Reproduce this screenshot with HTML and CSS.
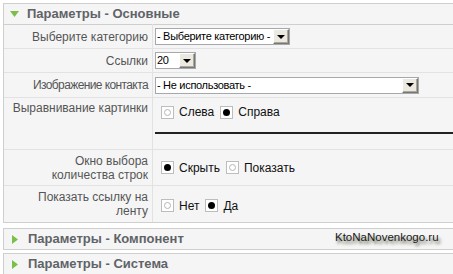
FILE: index.html
```html
<!DOCTYPE html>
<html>
<head>
<meta charset="utf-8">
<link rel="stylesheet" href="styles.css">
</head>
<body>
<div class="page">
  <div class="panel first">
    <div class="panel-title"><svg class="arrow" width="9" height="6" viewBox="0 0 9 6"><path d="M0 0H9L4.5 6Z" fill="#7bbf4a"/></svg>Параметры - Основные</div>
    <table class="params">
      <tr class="r1">
        <td class="key">Выберите категорию</td>
        <td class="val"><div class="select w-cat"><span class="sel-text">- Выберите категорию -</span><span class="btn"><i class="tri"></i></span></div></td>
      </tr>
      <tr class="r2">
        <td class="key">Ссылки</td>
        <td class="val"><div class="select w-num"><span class="sel-text">20</span><span class="btn"><i class="tri"></i></span></div></td>
      </tr>
      <tr class="r3">
        <td class="key tight">Изображение контакта</td>
        <td class="val"><div class="select w-img"><span class="sel-text">- Не использовать -</span><span class="btn"><i class="tri"></i></span></div></td>
      </tr>
      <tr class="r4">
        <td class="key top">Выравнивание картинки</td>
        <td class="val top">
          <div class="radios pad4">
            <span class="radio"><i class="dot off"></i></span><span class="rlabel">Слева</span>
            <span class="radio"><i class="dot on"></i></span><span class="rlabel">Справа</span>
          </div>
          <div class="rule"></div>
        </td>
      </tr>
      <tr class="r5">
        <td class="key">Окно выбора<br>количества строк</td>
        <td class="val">
          <div class="radios">
            <span class="radio"><i class="dot on"></i></span><span class="rlabel">Скрыть</span>
            <span class="radio"><i class="dot off"></i></span><span class="rlabel">Показать</span>
          </div>
        </td>
      </tr>
      <tr class="r6">
        <td class="key">Показать ссылку на<br>ленту</td>
        <td class="val">
          <div class="radios low">
            <span class="radio"><i class="dot off"></i></span><span class="rlabel">Нет</span>
            <span class="radio"><i class="dot on"></i></span><span class="rlabel">Да</span>
          </div>
        </td>
      </tr>
    </table>
  </div>
  <div class="panel closed">
    <div class="panel-title"><svg class="arrow" width="6" height="9" viewBox="0 0 6 9"><path d="M0 0V9L6 4.5Z" fill="#7bbf4a"/></svg>Параметры - Компонент</div>
  </div>
  <div class="panel closed">
    <div class="panel-title"><svg class="arrow" width="6" height="9" viewBox="0 0 6 9"><path d="M0 0V9L6 4.5Z" fill="#7bbf4a"/></svg>Параметры - Система</div>
  </div>
  <div class="watermark">KtoNaNovenkogo.ru</div>
</div>
</body>
</html>
```

FILE: styles.css
```css
html, body {
  margin: 0;
  padding: 0;
  background: #ffffff;
  overflow: hidden;
}
body {
  font-family: "Liberation Sans", Arial, sans-serif;
  width: 453px;
  height: 274px;
}
.page {
  position: relative;
  padding: 3px 0 0 3px;
  width: 450px;
  overflow: hidden;
}
.panel {
  width: 470px;
  border: 1px solid #cfcfcf;
  background: #f5f5f5;
  margin-bottom: 3px;
}
.panel.first {
  margin-bottom: 5px;
}
.panel-title {
  height: 20px;
  line-height: 20px;
  font-size: 13px;
  font-weight: bold;
  color: #5f6368;
  display: flex;
  align-items: center;
  padding-left: 6px;
}
.panel-title .arrow {
  margin-right: 8px;
}
.closed .panel-title .arrow {
  margin-left: 2px;
  margin-right: 10px;
}
.params {
  border-collapse: collapse;
  border-top: 1px solid #cfcfcf;
  width: 100%;
}
.params td {
  padding: 0;
  font-size: 12px;
  color: #555;
}
.params .key {
  width: 144px;
  text-align: right;
  padding-right: 4px;
  border-right: 1px solid #e2e2e2;
  border-bottom: 1px solid #e2e2e2;
  line-height: 14px;
}
.params .key.tight {
  letter-spacing: -0.6px;
}
.params .val {
  padding-left: 2px;
  border-bottom: 1px solid #e2e2e2;
  color: #111;
}
.params tr:last-child td { border-bottom: none; }
.params .top { vertical-align: top; }
.params .key.top { padding-top: 3px; }
.r1 .val { height: 23px; }
.r2 .val { height: 23px; }
.r3 .val { height: 24px; }
.r4 .val { height: 51px; }
.r5 .val { height: 35px; }
.r6 .val { height: 36px; }

.select {
  display: flex;
  align-items: stretch;
  height: 17px;
  box-sizing: border-box;
  border: 1px solid #a5a9ae;
  background: #fff;
  font-size: 11px;
  letter-spacing: -0.3px;
  color: #000;
}
.sel-text {
  flex: 1;
  line-height: 15px;
  padding-left: 1px;
  white-space: nowrap;
  overflow: hidden;
}
.w-cat { width: 135px; }
.w-num { width: 41px; }
.w-img { width: 264px; }
.btn {
  width: 16px;
  flex: none;
  box-sizing: border-box;
  background: #ece9e0;
  border-top: 1px solid #fff;
  border-left: 1px solid #fff;
  border-right: 1px solid #777;
  border-bottom: 1px solid #777;
  box-shadow: inset -1px -1px 0 #aca899;
  display: flex;
  align-items: center;
  justify-content: center;
}
.tri {
  width: 0;
  height: 0;
  border-left: 4px solid transparent;
  border-right: 4px solid transparent;
  border-top: 4px solid #000;
}

.radios {
  display: flex;
  align-items: center;
  font-size: 12px;
  color: #111;
  padding-left: 6px;
}
.radios.pad4 { padding-top: 7px; }
.radios.low { padding-top: 3px; }
.radio {
  width: 13px;
  height: 13px;
  box-sizing: border-box;
  border: 1px solid #bdbdbd;
  background: #fff;
  display: flex;
  align-items: center;
  justify-content: center;
  margin-right: 5px;
}
.dot {
  width: 7px;
  height: 7px;
  border-radius: 50%;
  box-sizing: border-box;
}
.dot.on { background: #000; }
.dot.off { border: 1px solid #b5b5b5; background: #fff; }
.rlabel { margin-right: 6px; }
.rule {
  margin-top: 13px;
  height: 2px;
  background: #222;
  width: 300px;
}
.watermark {
  position: absolute;
  left: 335px;
  top: 231px;
  font-size: 11.5px;
  color: #1a1a1a;
  text-shadow: 2px 3px 3px #6b6b5a;
}
```
